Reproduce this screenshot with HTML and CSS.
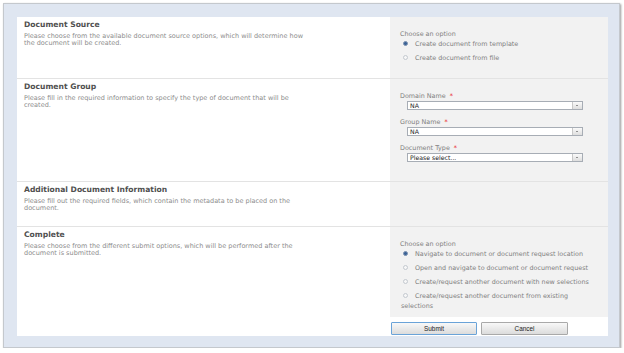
FILE: index.html
```html
<!DOCTYPE html>
<html lang="en">
<head>
    <meta charset="UTF-8">
    <meta name="viewport" content="width=device-width, initial-scale=1.0">
    <title>New Document</title>
    <link rel="stylesheet" href="styles.css">
</head>
<body>
    <div class="frame">
        <div class="form">
            <!-- Document Source -->
            <div class="section section-source">
                <div class="section-info">
                    <h3 class="section-title">Document Source</h3>
                    <p class="section-desc">Please choose from the available document source options, which will determine how the document will be created.</p>
                </div>
                <div class="section-field">
                    <div class="field-label">Choose an option</div>
                    <div class="option"><span class="radio checked"></span>Create document from template</div>
                    <div class="option"><span class="radio"></span>Create document from file</div>
                </div>
            </div>

            <!-- Document Group -->
            <div class="section section-group">
                <div class="section-info">
                    <h3 class="section-title">Document Group</h3>
                    <p class="section-desc">Please fill in the required information to specify the type of document that will be created.</p>
                </div>
                <div class="section-field">
                    <div class="field-label">Domain Name <span class="required">*</span></div>
                    <div class="select">
                        <span class="select-value">NA</span>
                        <span class="select-arrow"></span>
                    </div>
                    <div class="field-label">Group Name <span class="required">*</span></div>
                    <div class="select">
                        <span class="select-value">NA</span>
                        <span class="select-arrow"></span>
                    </div>
                    <div class="field-label">Document Type <span class="required">*</span></div>
                    <div class="select">
                        <span class="select-value">Please select...</span>
                        <span class="select-arrow"></span>
                    </div>
                </div>
            </div>

            <!-- Additional Document Information -->
            <div class="section section-extra">
                <div class="section-info">
                    <h3 class="section-title">Additional Document Information</h3>
                    <p class="section-desc">Please fill out the required fields, which contain the metadata to be placed on the document.</p>
                </div>
                <div class="section-field"></div>
            </div>

            <!-- Complete -->
            <div class="section section-complete">
                <div class="section-info">
                    <h3 class="section-title">Complete</h3>
                    <p class="section-desc">Please choose from the different submit options, which will be performed after the document is submitted.</p>
                </div>
                <div class="section-field">
                    <div class="field-label">Choose an option</div>
                    <div class="option"><span class="radio checked"></span>Navigate to document or document request location</div>
                    <div class="option"><span class="radio"></span>Open and navigate to document or document request</div>
                    <div class="option"><span class="radio"></span>Create/request another document with new selections</div>
                    <div class="option option-wrap"><span class="radio"></span>Create/request another document from existing selections</div>
                </div>
            </div>

            <div class="actions">
                <button class="btn btn-focus">Submit</button>
                <button class="btn">Cancel</button>
            </div>
        </div>
    </div>
</body>
</html>
```

FILE: styles.css
```css
body {
    margin: 0;
    background-color: white;
    font-family: "DejaVu Sans", Verdana, sans-serif;
}

.frame {
    box-sizing: border-box;
    width: 617px;
    height: 345px;
    margin: 3px 0 0 3px;
    padding: 13px 11px 11px 13px;
    background-color: #dfe6f1;
    border: 1px solid #c4c8cd;
    box-shadow: 1px 1px 2px rgba(0, 0, 0, 0.4);
}

.form {
    background-color: white;
    height: 100%;
}

.section {
    display: flex;
    box-sizing: border-box;
    border-top: 1px solid #e3e3e3;
}

.section-source {
    border-top: none;
    min-height: 61px;
}

.section-group {
    min-height: 103px;
}

.section-extra {
    min-height: 45px;
}

.section-complete {
    min-height: 91px;
}

.section-info {
    flex: 0 0 373px;
    box-sizing: border-box;
    padding: 3px 0 0 7px;
}

.section-title {
    margin: 0 0 3px 0;
    font-size: 7.6px;
    line-height: 10px;
    font-weight: bold;
    color: #505050;
}

.section-desc {
    margin: 0;
    max-width: 280px;
    font-size: 6.5px;
    line-height: 7px;
    color: #8c8c8c;
}

.section-field {
    flex: 1;
    box-sizing: border-box;
    padding: 12px 14px 0 10px;
    background-color: #f2f2f2;
}

.field-label {
    font-size: 6.4px;
    line-height: 10px;
    color: #808080;
}

.required {
    color: #e82020;
    margin-left: 2px;
}

.option {
    margin: 4px 0 0 1px;
    font-size: 6.4px;
    line-height: 10px;
    color: #808080;
}

.field-label + .option {
    margin-top: 0;
}

.radio {
    display: inline-block;
    box-sizing: border-box;
    width: 5px;
    height: 5px;
    margin: 0 7px 0 2px;
    border: 1px solid #c3c8cf;
    border-radius: 50%;
    background-color: #f7f7f7;
    vertical-align: 0;
}

.radio.checked {
    border-color: #7d93b0;
    background-color: #3b6296;
}

.select {
    display: flex;
    box-sizing: border-box;
    width: 176px;
    height: 9px;
    margin: 0 0 7px 7px;
    background-color: white;
    border: 1px solid #a7adb5;
}

.select-value {
    flex: 1;
    padding-left: 2px;
    font-size: 6.2px;
    line-height: 7px;
    color: #222;
}

.select-arrow {
    position: relative;
    width: 9px;
    border-left: 1px solid #c8c8c8;
    background: linear-gradient(#fafafa, #dedede);
}

.select-arrow::after {
    content: "";
    position: absolute;
    left: 3px;
    top: 3px;
    border-left: 1.5px solid transparent;
    border-right: 1.5px solid transparent;
    border-top: 1.5px solid #333;
}

.actions {
    display: flex;
    gap: 4px;
    padding: 5px 0 0 374px;
    height: 19px;
    box-sizing: border-box;
}

.btn {
    box-sizing: border-box;
    width: 86px;
    height: 13px;
    padding: 0;
    font-family: "Liberation Sans", Arial, sans-serif;
    font-size: 6.4px;
    color: #222;
    background: linear-gradient(#f8f8f8, #dcdcdc);
    border: 1px solid #a9a9a9;
    border-radius: 1px;
}

.btn + .btn {
    width: 87px;
}

.btn-focus {
    border-color: #6aa3d8;
}
```
